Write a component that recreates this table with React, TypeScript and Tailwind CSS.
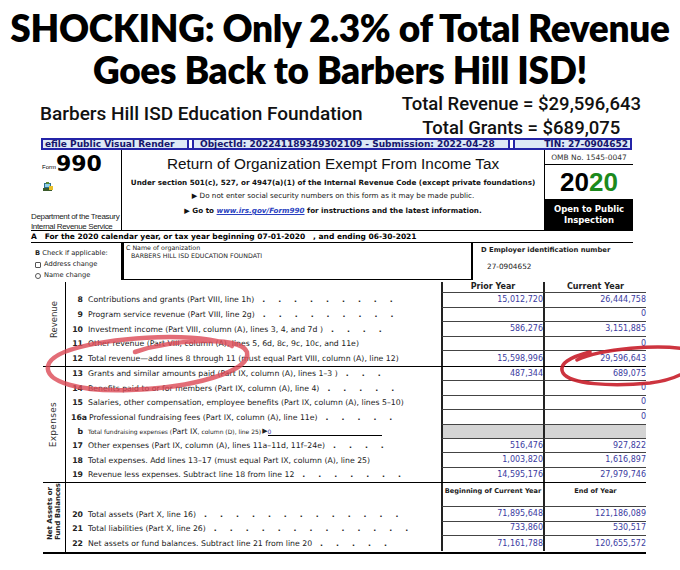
type Row = {
  num: string;
  text: string;
  dots?: number;
  prior?: string;
  current?: string;
  numW?: number;
};

const revenueRows: Row[] = [
  { num: "8", text: "Contributions and grants (Part VIII, line 1h)", dots: 9, prior: "15,012,720", current: "26,444,758" },
  { num: "9", text: "Program service revenue (Part VIII, line 2g)", dots: 9, current: "0" },
  { num: "10", text: "Investment income (Part VIII, column (A), lines 3, 4, and 7d )", dots: 4, prior: "586,276", current: "3,151,885" },
  { num: "11", text: "Other revenue (Part VIII, column (A), lines 5, 6d, 8c, 9c, 10c, and 11e)", current: "0" },
  { num: "12", text: "Total revenue\u2014add lines 8 through 11 (must equal Part VIII, column (A), line 12)", prior: "15,598,996", current: "29,596,643" },
];

const expenseRowsTop: Row[] = [
  { num: "13", text: "Grants and similar amounts paid (Part IX, column (A), lines 1\u20133 )", dots: 3, prior: "487,344", current: "689,075" },
  { num: "14", text: "Benefits paid to or for members (Part IX, column (A), line 4)", dots: 5, current: "0" },
  { num: "15", text: "Salaries, other compensation, employee benefits (Part IX, column (A), lines 5\u201310)", current: "0" },
  { num: "16a", text: "Professional fundraising fees (Part IX, column (A), line 11e)", dots: 5, current: "0", numW: 21 },
];

const expenseRowsBottom: Row[] = [
  { num: "17", text: "Other expenses (Part IX, column (A), lines 11a\u201311d, 11f\u201324e)", dots: 4, prior: "516,476", current: "927,822" },
  { num: "18", text: "Total expenses. Add lines 13\u201317 (must equal Part IX, column (A), line 25)", prior: "1,003,820", current: "1,616,897" },
  { num: "19", text: "Revenue less expenses. Subtract line 18 from line 12", dots: 7, prior: "14,595,176", current: "27,979,746" },
];

const netRows: Row[] = [
  { num: "20", text: "Total assets (Part X, line 16)", dots: 13, prior: "71,895,648", current: "121,186,089" },
  { num: "21", text: "Total liabilities (Part X, line 26)", dots: 13, prior: "733,860", current: "530,517" },
  { num: "22", text: "Net assets or fund balances. Subtract line 21 from line 20", dots: 5, prior: "71,161,788", current: "120,655,572" },
];

function Dots({ n }: { n: number }) {
  return (
    <span className="ml-[8px] inline-flex gap-[13px] font-bold">
      {Array.from({ length: n }, (_, i) => (
        <span key={i}>.</span>
      ))}
    </span>
  );
}

function ValueCell({ value, last, gray }: { value?: string; last?: boolean; gray?: boolean }) {
  return (
    <div
      className={`flex h-full items-center justify-end border-l-2 border-l-[#222] text-[8px] text-[#3b3b9f] ${
        last ? "" : "border-b border-b-[#444]"
      } ${gray ? "bg-[#d4d4d4]" : ""}`}
    >
      {value}
    </div>
  );
}

function LineRow({ row, h, last }: { row: Row; h: string; last?: boolean }) {
  return (
    <div className={`grid grid-cols-[375px_102px_103px] ${h}`}>
      <div className="flex items-center whitespace-nowrap text-[7.75px] text-[#222]">
        <span className="shrink-0 text-right font-bold" style={{ width: row.numW ?? 17 }}>
          {row.num}
        </span>
        <span className={row.numW ? "ml-[2px]" : "ml-[5px]"}>{row.text}</span>
        {row.dots ? <Dots n={row.dots} /> : null}
      </div>
      <ValueCell value={row.prior} last={last} />
      <ValueCell value={row.current} last={last} />
    </div>
  );
}

function SideLabel({ children, className, inner }: { children: React.ReactNode; className?: string; inner?: string }) {
  return (
    <div className={`flex w-[23px] shrink-0 items-center justify-center border-r border-black ${className ?? ""}`}>
      <div className={`rotate-180 whitespace-nowrap [writing-mode:vertical-rl] ${inner ?? ""}`}>{children}</div>
    </div>
  );
}

function FormIcon() {
  return (
    <svg width="10" height="9" viewBox="0 0 10 9">
      <rect x="1" y="1" width="7" height="5" fill="#2f6f8f" />
      <rect x="2" y="2" width="5" height="3" fill="#8fd0e8" />
      <rect x="0" y="6" width="9" height="3" fill="#3b5b2b" />
      <rect x="6" y="4" width="4" height="4" fill="#e8c02a" />
      <rect x="3" y="0" width="3" height="2" fill="#5a8a3a" />
    </svg>
  );
}

export default function App() {
  const dv = "font-['DejaVu_Sans',Verdana,sans-serif]";
  const lib = "font-['Liberation_Sans',Arial,sans-serif]";

  return (
    <div className="relative h-[570px] w-[680px] overflow-hidden bg-white text-black">
      {/* headline */}
      <div className="h-[92px] pt-[7px] text-center font-['Lato',sans-serif] text-[37px] font-extrabold leading-[42px] tracking-[-0.3px]">
        <div>SHOCKING: Only 2.3% of Total Revenue</div>
        <div>Goes Back to Barbers Hill ISD!</div>
      </div>

      <div className="flex h-[45px] items-start whitespace-nowrap font-['Roboto',sans-serif] font-medium text-[#111]">
        <div className="ml-[40px] mt-[11px] text-[19px] leading-[22px]">Barbers Hill ISD Education Foundation</div>
        <div className="ml-auto mr-[39px] flex flex-col items-center text-[18.5px] leading-[24px]">
          <div>Total Revenue = $29,596,643</div>
          <div>Total Grants = $689,075</div>
        </div>
      </div>

      {/* efile bar */}
      <div className={`ml-[41px] mt-[1px] flex h-[12px] w-[591px] whitespace-nowrap border-2 border-[#2424a8] bg-white text-[9px] font-bold leading-[8px] text-[#15156b] ${dv}`}>
        <div className="w-[146px] border-r-2 border-[#2424a8] bg-[#dde9f6] pl-[2px]">efile Public Visual Render</div>
        <div className="ml-[3px] w-[318px] border-x-2 border-[#2424a8] bg-[#dde9f6] pl-[6px]">
          ObjectId: 202241189349302109 - Submission: 2022-04-28
        </div>
        <div className="ml-[3px] flex-1 border-l-2 border-[#2424a8] bg-[#dde9f6] pr-[2px] text-right">TIN: 27-0904652</div>
      </div>

      {/* form header */}
      <div className="ml-[31px] flex h-[81px] w-[602px] border-b border-black">
        <div className="flex w-[91px] shrink-0 flex-col border-r border-black">
          <div className="ml-[11px] mt-[3px] flex items-end">
            <span className={`mb-[3px] text-[6px] ${lib}`}>Form</span>
            <span className={`text-[22px] font-bold leading-[22px] ${dv}`}>990</span>
          </div>
          <div className="ml-[12px] mt-[7px]">
            <FormIcon />
          </div>
          <div className={`mt-[21px] whitespace-nowrap text-[8px] leading-[10px] tracking-[-0.35px] text-[#222] ${lib}`}>
            <div>Department of the Treasury</div>
            <div>Internal Revenue Service</div>
          </div>
        </div>
        <div className="flex w-[422px] shrink-0 flex-col items-center whitespace-nowrap text-[#111]">
          <div className={`mt-[5px] text-[15.3px] leading-[18px] ${lib}`}>Return of Organization Exempt From Income Tax</div>
          <div className={`mt-[5px] text-[7.2px] font-bold leading-[10px] ${dv}`}>
            Under section 501(c), 527, or 4947(a)(1) of the Internal Revenue Code (except private foundations)
          </div>
          <div className={`mt-[3px] text-[7.2px] leading-[10px] ${dv}`}>
            {"\u25B6"} Do not enter social security numbers on this form as it may be made public.
          </div>
          <div className={`mt-[5px] text-[7.2px] font-bold leading-[10px] ${dv}`}>
            {"\u25B6"} Go to <span className="italic text-[#2a3fbf] underline">www.irs.gov/Form990</span> for instructions and
            the latest information.
          </div>
        </div>
        <div className="flex flex-1 flex-col border-l border-black">
          <div className={`h-[15px] whitespace-nowrap border-b border-black text-center text-[7.5px] leading-[15px] text-[#333] ${dv}`}>
            OMB No. 1545-0047
          </div>
          <div className={`flex h-[34px] items-center justify-center text-[26px] font-bold ${lib}`}>
            <span>20</span>
            <span className="text-[#1c8a1c]">20</span>
          </div>
          <div className={`flex flex-1 flex-col items-center justify-center bg-black text-[8.5px] font-bold leading-[11px] text-white ${dv}`}>
            <div>Open to Public</div>
            <div>Inspection</div>
          </div>
        </div>
      </div>

      {/* row A */}
      <div className={`ml-[31px] h-[12px] w-[602px] whitespace-pre border-b border-black text-[7.5px] font-bold leading-[11px] ${dv}`}>
        {"A   For the 2020 calendar year, or tax year beginning 07-01-2020   , and ending 06-30-2021"}
      </div>

      {/* B C D */}
      <div className={`ml-[31px] flex h-[37px] w-[602px] whitespace-nowrap text-[6.7px] text-[#222] ${dv}`}>
        <div className="w-[90px] shrink-0 pl-[4px] pt-[5px] leading-[11px]">
          <div>
            <span className="font-bold">B</span> Check if applicable:
          </div>
          <div className="flex items-center gap-[3px]">
            <span className="inline-block h-[6px] w-[6px] rounded-[1px] border border-[#555]" />
            Address change
          </div>
          <div className="flex items-center gap-[3px]">
            <span className="inline-block h-[6px] w-[6px] rounded-full border border-[#555]" />
            Name change
          </div>
        </div>
        <div className="w-[352px] shrink-0 border-b-[1.5px] border-l-[3px] border-r-2 border-black pl-[2px] pt-[1px] text-[6.3px] leading-[8px]">
          <div>
            <span>C</span> Name of organization
          </div>
          <div className="pl-[5px]">BARBERS HILL ISD EDUCATION FOUNDATI</div>
        </div>
        <div className="flex-1 pl-[8px] pt-[3px]">
          <div className="text-[6.8px] font-bold leading-[9px]">D Employer identification number</div>
          <div className="mt-[7px] pl-[6px] text-[7.3px]">27-0904652</div>
        </div>
      </div>

      {/* table */}
      <div className={`ml-[43px] mt-[2px] w-[603px] border-b-2 border-black ${dv}`}>
        <div className="flex">
          <SideLabel className="pb-[8px]" inner="text-[8.5px] text-[#333]">
            Revenue
          </SideLabel>
          <div className="flex-1">
            <div className="grid h-[11px] grid-cols-[375px_102px_103px] text-[8px] font-bold leading-[10px] text-[#222]">
              <div />
              <div className="border-b border-l-2 border-b-[#444] border-l-[#222] text-center">Prior Year</div>
              <div className="border-b border-l-2 border-b-[#444] border-l-[#222] text-center">Current Year</div>
            </div>
            {revenueRows.map((r, i) => (
              <LineRow key={r.num} row={r} h="h-[14.6px]" last={i === revenueRows.length - 1} />
            ))}
          </div>
        </div>

        <div className="flex border-t border-black">
          <SideLabel inner="text-[9px] tracking-[0.3px] text-[#333]">Expenses</SideLabel>
          <div className="flex-1">
            {expenseRowsTop.map((r) => (
              <LineRow key={r.num} row={r} h="h-[14.4px]" />
            ))}
            <div className="grid h-[14.4px] grid-cols-[375px_102px_103px]">
              <div className="flex items-center whitespace-nowrap text-[6px] text-[#222]">
                <span className="w-[17px] shrink-0 text-right text-[7.75px] font-bold">b</span>
                <span className="ml-[5px]">Total fundraising expenses (</span>
                <span className="text-[7.75px]">Part IX</span>
                <span>, column (D), line 25)</span>
                <span className="ml-[1px] text-[7px]">{"\u25B6"}</span>
                <span className="w-[114px] border-b border-black leading-[7px] text-[#3b3b9f]">0</span>
              </div>
              <ValueCell gray />
              <ValueCell gray />
            </div>
            {expenseRowsBottom.map((r, i) => (
              <LineRow key={r.num} row={r} h="h-[14.4px]" last={i === expenseRowsBottom.length - 1} />
            ))}
          </div>
        </div>

        <div className="flex border-t border-black">
          <SideLabel className="pb-[12px]" inner="text-[7px] font-bold leading-[7.5px] text-[#222]">
            Net Assets or
            <br />
            Fund Balances
          </SideLabel>
          <div className="flex-1">
            <div className="grid h-[24px] grid-cols-[375px_102px_103px] whitespace-nowrap text-[6.6px] font-bold text-[#222]">
              <div />
              <div className="border-b border-l-2 border-b-[#444] border-l-[#222] pt-[4px] text-center">Beginning of Current Year</div>
              <div className="border-b border-l-2 border-b-[#444] border-l-[#222] pt-[4px] text-center">End of Year</div>
            </div>
            {netRows.map((r, i) => (
              <LineRow key={r.num} row={r} h="h-[14.6px]" last={i === netRows.length - 1} />
            ))}
          </div>
        </div>
      </div>

      {/* red marker circles */}
      <svg className="pointer-events-none absolute left-0 top-0" width="680" height="570" viewBox="0 0 680 570">
        <path
          d="M135 352 C170 340, 240 335, 247 352 C252 372, 190 388, 130 390 C80 392, 45 382, 48 366 C52 348, 110 338, 170 337 C200 337, 225 341, 232 346"
          fill="none"
          stroke="#dc4855"
          strokeOpacity="0.8"
          strokeWidth="4.5"
          strokeLinecap="round"
        />
        <path
          d="M577 360 C600 349, 660 343, 690 350 C705 358, 690 378, 650 383 C610 387, 570 384, 563 373 C558 364, 570 357, 590 352"
          fill="none"
          stroke="#c81e2a"
          strokeOpacity="0.9"
          strokeWidth="3.5"
          strokeLinecap="round"
        />
      </svg>
    </div>
  );
}
